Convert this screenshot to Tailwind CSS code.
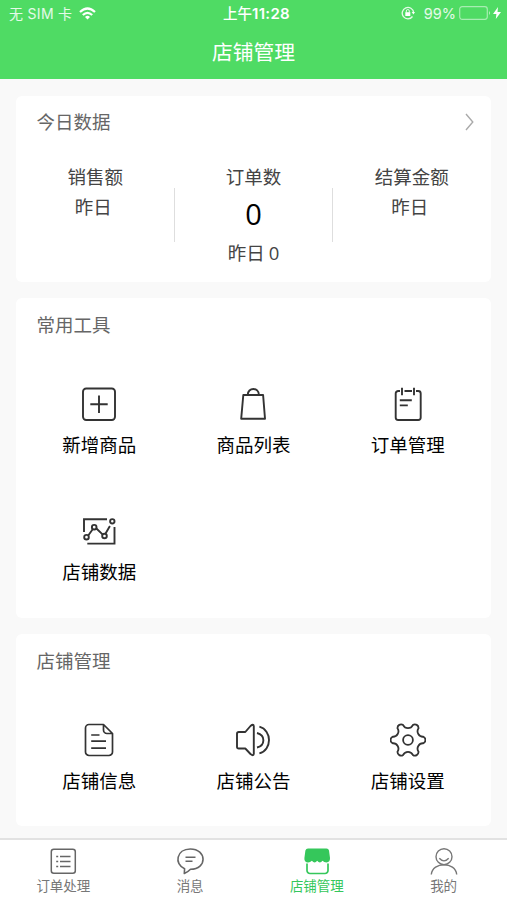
<!DOCTYPE html>
<html lang="zh-CN">
<head>
<meta charset="utf-8">
<title>店铺管理</title>
<script src="https://cdn.jsdelivr.net/npm/@tailwindcss/browser@4"></script>
</head>
<body class="w-[507px] h-[900px] overflow-hidden bg-[#f9f9f9] font-['Noto_Sans_CJK_SC',sans-serif] text-black flex flex-col">
<header class="h-[79px] shrink-0 bg-[#4fdb64] text-white">
  <div class="h-7 grid grid-cols-3 items-center px-[9px] text-[14px] leading-7">
    <div class="flex items-center text-white/85"><span class="whitespace-pre font-['Inter','Noto_Sans_CJK_SC',sans-serif] text-[14px] tracking-[0.3px]">无 SIM 卡</span>
      <svg class="ml-[7px] w-[17px] h-[13px] -mt-0.5" viewBox="0 0 17 13" fill="none" stroke="#fff" stroke-width="2.2"><path d="M1 5Q8.500-2 16 5M3.800 8Q8.500 3.600 13.200 8"/><path d="M6 9.900Q8.500 7.700 11 9.900L8.500 12.500Z" fill="#fff" stroke="none"/></svg>
    </div>
    <div class="text-center pl-[6px] font-medium font-['Inter','Noto_Sans_CJK_SC',sans-serif] whitespace-nowrap text-[14.500px]">上午<span class="font-semibold text-[15px] tracking-[0.3px]">11:28</span></div>
    <div class="flex items-center justify-end -mr-[3px]">
      <svg class="w-[14px] h-[14px] mr-[9px] -mt-0.5" viewBox="0 0 14 14" fill="none" stroke="#fff" stroke-opacity=".85"><path d="M11.500 10.500A5.700 5.700 0 1 1 12.600 6.500" stroke-width="1.300"/><path d="M10.700 6h3.300l-1.600 2.500z" fill="#fff" stroke="none"/><path d="M5.300 6.500V5a1.500 1.500 0 0 1 3 0v1.500"/><rect x="4.300" y="6.200" width="5" height="3.800" fill="#fff" stroke="none"/></svg>
      <span class="font-['Inter',sans-serif] text-[14.500px] text-white/85">99%</span>
      <svg class="ml-[3px] w-[32px] h-[14px] -mt-0.5" viewBox="0 0 32 14" fill="none"><rect x=".7" y=".7" width="27.600" height="12.600" rx="2.500" stroke="#fff" stroke-opacity=".5" stroke-width="1.200"/><path d="M30 5q2 2 0 4z" fill="#fff" fill-opacity=".6"/></svg>
      <svg class="ml-[2px] w-[8px] h-[12px] -mt-0.5" viewBox="0 0 8 12" fill="#fff"><path d="M5 0L0 7h3.400L2.800 12L8 5H4.500z"/></svg>
    </div>
  </div>
  <h1 class="text-center text-[20.8px] leading-[46px] font-normal">店铺管理</h1>
</header>

<main class="flex-1 px-4 pt-[17px] flex flex-col gap-4">
  <section class="h-[186px] shrink-0 rounded-md bg-white pt-[11px]">
    <div class="flex items-center justify-between pl-[20.500px] pr-[17px] h-7">
      <h2 class="text-[18.500px] leading-7 text-[#666]">今日数据</h2>
      <svg class="w-[9px] h-[18px] mt-0.5" viewBox="0 0 9 18" fill="none" stroke="#aaa" stroke-width="1.400"><path d="M1 1L7.800 9L1 17"/></svg>
    </div>
    <div class="grid grid-cols-3 text-center text-[18.500px] text-[#444] mt-[27px]">
      <div class="h-[105px]"><p class="leading-7">销售额</p><p class="leading-7 mt-[2px] pr-1">昨日</p></div>
      <div class="h-[105px] relative"><i class="absolute left-0 top-[26px] h-[54px] w-px bg-[#dedede]"></i><i class="absolute right-0 top-[26px] h-[54px] w-px bg-[#dedede]"></i>
        <p class="leading-7">订单数</p><p class="text-[29px] leading-[42px] text-black mt-[3px] font-['Open_Sans',sans-serif]">0</p><p class="leading-7 mt-[3px]">昨日<span class="pl-[4px] font-['Open_Sans',sans-serif]">0</span></p></div>
      <div class="h-[105px]"><p class="leading-7">结算金额</p><p class="leading-7 mt-[2px] pr-1">昨日</p></div>
    </div>
  </section>

  <section class="h-[320px] shrink-0 rounded-md bg-white pt-3">
    <h2 class="pl-[20.500px] text-[18.500px] leading-7 text-[#666]">常用工具</h2>
    <div class="grid grid-cols-3 gap-y-[55px] px-1.5 mt-[48px] text-[18.500px]">
      <div class="flex flex-col items-center gap-[8px]">
        <svg class="w-[36px] h-[36px]" viewBox="0 0 36 36" fill="none" stroke="#333" stroke-width="1.900"><rect x="2" y="2.500" width="32" height="31.500" rx="3.200"/><path d="M18 9.500v17.500M9.300 18.200h17.400"/></svg>
        <span class="leading-7">新增商品</span></div>
      <div class="flex flex-col items-center gap-[8px]">
        <svg class="w-[36px] h-[36px]" viewBox="0 0 36 36" fill="none" stroke="#333" stroke-width="1.900" stroke-linejoin="round"><path d="M8.300 9h19.800L30 32.700H6.200zM12.700 9c0-8 11.200-8 11.200 0"/></svg>
        <span class="leading-7">商品列表</span></div>
      <div class="flex flex-col items-center gap-[8px]">
        <svg class="w-[36px] h-[36px]" viewBox="0 0 36 36" fill="none" stroke="#333" stroke-width="1.900"><path d="M10 5H8.200a2.500 2.500 0 0 0-2.500 2.500v24A2.500 2.500 0 0 0 8.200 34h20a2.500 2.500 0 0 0 2.500-2.500v-24A2.500 2.500 0 0 0 28.200 5H26M14.500 5h7.500M12 1.800v7.400M24 1.800v7.400M9.800 14.300h12M9.800 19.400h8"/></svg>
        <span class="leading-7">订单管理</span></div>
      <div class="flex flex-col items-center gap-[8px]">
        <svg class="w-[36px] h-[36px]" viewBox="0 0 36 36" fill="none" stroke="#333" stroke-width="1.900"><path d="M3 19V6.200h23M33.500 14v16.600H6.300M7.400 22.200l4.500-6.200M15.400 15.500l6.400 6.100M24.600 20.500l4.300-7.500"/><circle cx="5.500" cy="24.200" r="2.300"/><circle cx="13.200" cy="14.200" r="2.300"/><circle cx="23.500" cy="23" r="2.300"/><circle cx="31.300" cy="8.300" r="2.200"/></svg>
        <span class="leading-7">店铺数据</span></div>
    </div>
  </section>

  <section class="h-[192px] shrink-0 rounded-md bg-white pt-3">
    <h2 class="pl-[20.500px] text-[18.500px] leading-7 text-[#666]">店铺管理</h2>
    <div class="grid grid-cols-3 px-1.5 mt-[48px] text-[18.500px]">
      <div class="flex flex-col items-center gap-[8px]">
        <svg class="w-[36px] h-[36px]" viewBox="0 0 36 36" fill="none" stroke="#333" stroke-width="1.700" stroke-linejoin="round"><path d="M22.500 2.500H8A3.500 3.500 0 0 0 4.500 6v24A3.500 3.500 0 0 0 8 33.500h20a3.500 3.500 0 0 0 3.500-3.500V11.500zM22.500 2.500V8a3.500 3.500 0 0 0 3.500 3.500h5.500M10.200 13h8.300M10.200 19.200h14.800M10.200 26.100h14.800"/></svg>
        <span class="leading-7">店铺信息</span></div>
      <div class="flex flex-col items-center gap-[8px]">
        <svg class="w-[36px] h-[36px]" viewBox="0 0 36 36" fill="none" stroke="#333" stroke-width="1.900" stroke-linejoin="round"><path d="M3.800 10h6.500L15.500 4q3-2.500 3.300 0v28q-.3 2.500-3.300 0l-5.200-5.500H3.800q-1.800 0-1.800-1.800V11.800Q2 10 3.800 10zM22 11c8.500 2 8.500 12.500 0 14.500M24.400 4.700c12.800 3.700 12.800 23 0 26.700"/></svg>
        <span class="leading-7">店铺公告</span></div>
      <div class="flex flex-col items-center gap-[8px]">
        <svg class="w-[36px] h-[36px]" viewBox="-18 -18 36 36" fill="none" stroke="#333" stroke-width="1.800" stroke-linejoin="round"><path d="M15.360-3.260A3.600 3.600 0 0 1 15.360 3.260A5.400 5.400 0 0 0 10.510 11.670A3.600 3.600 0 0 1 4.850 14.930A5.400 5.400 0 0 0-4.850 14.930A3.600 3.600 0 0 1-10.510 11.670A5.400 5.400 0 0 0-15.360 3.260A3.600 3.600 0 0 1-15.360-3.260A5.400 5.400 0 0 0-10.510-11.670A3.600 3.600 0 0 1-4.850-14.930A5.400 5.400 0 0 0 4.850-14.930A3.600 3.600 0 0 1 10.510-11.670A5.400 5.400 0 0 0 15.360-3.260Z"/><circle r="4.900"/></svg>
        <span class="leading-7">店铺设置</span></div>
    </div>
  </section>
</main>

<nav class="h-[62px] shrink-0 bg-white border-t-2 border-[#e2e2e2] grid grid-cols-4 text-[13.500px] text-[#777] pt-[7px]">
  <div class="flex flex-col items-center">
    <svg class="w-7 h-7" viewBox="0 0 28 28" fill="none" stroke="#666" stroke-width="1.500"><rect x="2.300" y="2.300" width="24" height="24" rx="2.500"/><path d="M11 9.500h10.500M11 14.500h10.500M11 19.500h10.500M7.200 9.500h2M7.200 14.500h2M7.200 19.500h2"/></svg>
    <span class="leading-5">订单处理</span></div>
  <div class="flex flex-col items-center">
    <svg class="w-7 h-7" viewBox="0 0 28 28" fill="none" stroke="#666" stroke-width="1.600" stroke-linejoin="round"><path d="M8.300 26.500L8.600 21.700C-2.300 17 .5 2 14.300 2C31 2 31.500 22.200 14.500 22.300Q12 25 8.300 26.500zM9.500 10.200h10M9.500 14.200h7"/></svg>
    <span class="leading-5">消息</span></div>
  <div class="flex flex-col items-center text-[#35c75b]">
    <svg class="w-7 h-7" viewBox="0 0 28 28" fill="none"><path d="M5 1.500h18.500q2 0 2.500 2l1 7.500q.2 4-3.500 4.500-2.500 0-4-1.700-2.600 3.200-5.300 0-2.600 3.200-5.300 0-2 2-4.500 1.700-3.300-.6-3-4.500l1-7.500q.6-2 2.600-2z" fill="#35c75b"/><path d="M4 16.500V23.500a3 3 0 0 0 3 3h15a3 3 0 0 0 3-3V16.500" stroke="#35c75b" stroke-width="1.700"/></svg>
    <span class="leading-5">店铺管理</span></div>
  <div class="flex flex-col items-center">
    <svg class="w-7 h-7" viewBox="0 0 28 28" fill="none" stroke="#777" stroke-width="1.400"><circle cx="14" cy="9.700" r="8"/><path d="M9.300 11.300q4.700 5.200 9.400 0M1.300 27.500C2.500 14.500 25.500 14.500 26.700 27.500"/></svg>
    <span class="leading-5">我的</span></div>
</nav>
</body>
</html>
